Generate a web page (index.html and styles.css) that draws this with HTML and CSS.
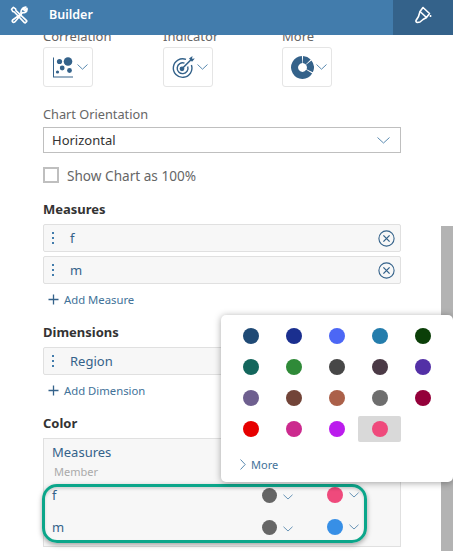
FILE: index.html
```html
<!DOCTYPE html>
<html lang="en">
<head>
  <meta charset="UTF-8" />
  <title>Builder</title>
  <link rel="stylesheet" href="styles.css">
</head>
<body>

  <header class="topbar">
    <svg class="tools-icon" width="18" height="18" viewBox="0 0 18 18" fill="none" stroke="#fff" stroke-width="1.6" stroke-linejoin="round">
      <path d="M1.5 3.2 L3.4 1.3 L5.6 2.8 L6 4.6 L16.6 14.6 Q17 15 16.6 15.6 L15.4 16.7 Q14.9 17 14.4 16.6 L4.3 6 L2.8 5.6 Z" />
      <path d="M15.9 1 L13.5 3.4 L14.7 4.6 L17 2.4 Q17.5 5.6 15 6.6 Q13.8 7 12.8 6.6 L2.6 14 Q1.8 15.2 2.6 16 Q3.6 16.9 4.8 15.9 L11.2 8.4 Q10.2 5 12.6 2.4 Q14 0.9 15.9 1 Z" />
    </svg>
    <span class="topbar-title">Builder</span>
    <div class="topbar-tab">
      <svg width="18" height="18" viewBox="0 0 18 18" fill="none" stroke="#fff" stroke-width="1.6" stroke-linejoin="round">
        <path d="M9 1.5 L15.5 7.5 L12.5 11.5 L6 5.5 Z" />
        <path d="M6 5.5 L4.5 10.5 L2 14.5 Q1.5 16 3.5 16.5 L6 16 L9 13.5 L12.5 11.5" />
        <path d="M16.5 9 V11" />
      </svg>
    </div>
  </header>

  <main class="panel">
    <div class="panel-inner">

      <div class="chart-types">
        <div class="chart-type">
          <div class="field-label">Correlation</div>
          <div class="tile">
            <svg width="21" height="21" viewBox="-1 0 21 21" fill="#34628a">
              <path d="M0 0.5 H1 V19.5 H20 V20.5 H0 Z" />
              <circle cx="15" cy="4.5" r="4.3" />
              <circle cx="6.5" cy="4.5" r="2.6" />
              <circle cx="9.2" cy="11" r="2.4" />
              <circle cx="16.5" cy="13.5" r="2.4" />
              <circle cx="4.5" cy="15" r="1.6" />
            </svg>
            <svg class="chevron" width="11" height="6" viewBox="0 0 11 6"><path d="M0.5 0.5 L5.5 5.2 L10.5 0.5" /></svg>
          </div>
        </div>
        <div class="chart-type chart-type-narrow">
          <div class="field-label">Indicator</div>
          <div class="tile">
            <svg width="23" height="23" viewBox="0 0 23 23" fill="none" stroke="#34628a" stroke-width="1.4">
              <path d="M14 3.4 A9.3 9.3 0 1 0 19.4 9" />
              <path d="M12.5 7.2 A5.4 5.4 0 1 0 15.7 10.5" />
              <circle cx="10" cy="12.8" r="1.7" fill="#34628a" />
              <path d="M10 12.8 L20 2.8" stroke-width="1.6" />
              <path d="M17 2.6 L20.5 0 L20 2.8 L22.8 2.4 L20 5.8 Z" fill="#34628a" stroke="none" />
            </svg>
            <svg class="chevron" width="11" height="6" viewBox="0 0 11 6"><path d="M0.5 0.5 L5.5 5.2 L10.5 0.5" /></svg>
          </div>
        </div>
        <div class="chart-type">
          <div class="field-label">More</div>
          <div class="tile">
            <svg width="23" height="23" viewBox="0 0 23 23" fill="none" stroke="#34628a" stroke-width="7">
              <path d="M11.09 3.61 A7.9 7.9 0 1 0 18.2 15.69" />
              <path d="M11.91 3.61 A7.9 7.9 0 0 1 17.18 6.01" />
              <path d="M17.72 6.64 A7.9 7.9 0 0 1 18.66 14.84" />
            </svg>
            <svg class="chevron" width="11" height="6" viewBox="0 0 11 6"><path d="M0.5 0.5 L5.5 5.2 L10.5 0.5" /></svg>
          </div>
        </div>
      </div>

      <div class="field-label orientation-label">Chart Orientation</div>
      <div class="select">
        <span>Horizontal</span>
        <svg class="chevron" width="13" height="7" viewBox="0 0 13 7"><path d="M0.5 0.5 L6.5 6 L12.5 0.5" /></svg>
      </div>

      <label class="check-row">
        <span class="checkbox"></span>
        <span>Show Chart as 100%</span>
      </label>

      <h2 class="section-title first-title">Measures</h2>
      <div class="token">
        <span class="grip"><i></i><i></i><i></i></span>
        <span class="token-name">f</span>
        <svg class="remove" width="17" height="17" viewBox="0 0 17 17" fill="none" stroke="#34628a" stroke-width="1.1">
          <circle cx="8.5" cy="8.5" r="7.6" />
          <path d="M5.4 5.4 L11.6 11.6 M11.6 5.4 L5.4 11.6" stroke-width="1.3" />
        </svg>
      </div>
      <div class="token token-next">
        <span class="grip"><i></i><i></i><i></i></span>
        <span class="token-name">m</span>
        <svg class="remove" width="17" height="17" viewBox="0 0 17 17" fill="none" stroke="#34628a" stroke-width="1.1">
          <circle cx="8.5" cy="8.5" r="7.6" />
          <path d="M5.4 5.4 L11.6 11.6 M11.6 5.4 L5.4 11.6" stroke-width="1.3" />
        </svg>
      </div>
      <div class="add-link">
        <svg width="11" height="11" viewBox="0 0 11 11" stroke="#34628a" stroke-width="1.3"><path d="M5.5 0.5 V10.5 M0.5 5.5 H10.5" /></svg>
        <span>Add Measure</span>
      </div>

      <h2 class="section-title">Dimensions</h2>
      <div class="token">
        <span class="grip"><i></i><i></i><i></i></span>
        <span class="token-name">Region</span>
      </div>
      <div class="add-link">
        <svg width="11" height="11" viewBox="0 0 11 11" stroke="#34628a" stroke-width="1.3"><path d="M5.5 0.5 V10.5 M0.5 5.5 H10.5" /></svg>
        <span>Add Dimension</span>
      </div>

      <h2 class="section-title">Color</h2>
      <div class="color-box">
        <div class="color-title">Measures</div>
        <div class="color-sub">Member</div>
        <div class="color-row">
          <span class="color-name">f</span>
          <span class="swatch-pick"><b class="dot dot-grey"></b><svg class="chevron" width="10" height="6" viewBox="0 0 11 6"><path d="M0.5 0.5 L5.5 5.2 L10.5 0.5" /></svg></span>
          <span class="swatch-pick"><b class="dot dot-pink"></b><svg class="chevron" width="10" height="6" viewBox="0 0 11 6"><path d="M0.5 0.5 L5.5 5.2 L10.5 0.5" /></svg></span>
        </div>
        <div class="color-row">
          <span class="color-name">m</span>
          <span class="swatch-pick"><b class="dot dot-grey"></b><svg class="chevron" width="10" height="6" viewBox="0 0 11 6"><path d="M0.5 0.5 L5.5 5.2 L10.5 0.5" /></svg></span>
          <span class="swatch-pick"><b class="dot dot-blue"></b><svg class="chevron" width="10" height="6" viewBox="0 0 11 6"><path d="M0.5 0.5 L5.5 5.2 L10.5 0.5" /></svg></span>
        </div>
      </div>

    </div>
  </main>

  <div class="scrollbar"></div>
  <div class="highlight"></div>

  <div class="palette">
    <div class="palette-grid">
      <span class="cell"><b class="dot" style="background:#1f4a75"></b></span>
      <span class="cell"><b class="dot" style="background:#1a2f8f"></b></span>
      <span class="cell"><b class="dot" style="background:#4c67f5"></b></span>
      <span class="cell"><b class="dot" style="background:#247dac"></b></span>
      <span class="cell"><b class="dot" style="background:#0b3f08"></b></span>
      <span class="cell"><b class="dot" style="background:#13665c"></b></span>
      <span class="cell"><b class="dot" style="background:#2f8a38"></b></span>
      <span class="cell"><b class="dot" style="background:#474747"></b></span>
      <span class="cell"><b class="dot" style="background:#4b3a46"></b></span>
      <span class="cell"><b class="dot" style="background:#5330a6"></b></span>
      <span class="cell"><b class="dot" style="background:#6e5f8f"></b></span>
      <span class="cell"><b class="dot" style="background:#724438"></b></span>
      <span class="cell"><b class="dot" style="background:#ab6049"></b></span>
      <span class="cell"><b class="dot" style="background:#6e6e6e"></b></span>
      <span class="cell"><b class="dot" style="background:#94003a"></b></span>
      <span class="cell"><b class="dot" style="background:#e60000"></b></span>
      <span class="cell"><b class="dot" style="background:#cc2a8e"></b></span>
      <span class="cell"><b class="dot" style="background:#bb1ced"></b></span>
      <span class="cell cell-selected"><b class="dot" style="background:#ef4a7c"></b></span>
    </div>
    <div class="palette-more">
      <svg class="chevron" width="6" height="11" viewBox="0 0 6 11"><path d="M0.5 0.5 L5.2 5.5 L0.5 10.5" /></svg>
      <span>More</span>
    </div>
  </div>

</body>
</html>
```

FILE: styles.css
```css
* {
  box-sizing: border-box;
}
body {
  margin: 0;
  width: 453px;
  height: 551px;
  overflow: hidden;
  position: relative;
  background: #fff;
  font-family: "Noto Sans", Arial, sans-serif;
  font-size: 13px;
  color: #666;
}
.topbar {
  height: 35px;
  background: #427cac;
  display: flex;
  align-items: center;
  color: #fff;
}
.tools-icon {
  margin: -5px 0 0 10px;
}
.topbar-title {
  margin: -6px 0 0 21px;
  font-size: 12.5px;
  font-weight: 600;
}
.topbar-tab {
  margin-left: auto;
  width: 60px;
  height: 35px;
  background: #34628a;
  display: flex;
  align-items: center;
  justify-content: center;
  padding-bottom: 5px;
}
.panel {
  height: 516px;
  overflow: hidden;
}
.panel-inner {
  margin: -7px 52px 0 43px;
}
.chart-types {
  display: flex;
}
.chart-type {
  width: 120px;
  flex: none;
}
.chart-type-narrow {
  width: 119px;
}
.field-label {
  height: 16px;
  line-height: 16px;
}
.tile {
  margin-top: 3px;
  width: 50px;
  height: 40px;
  border: 1px solid #e5e5e5;
  border-radius: 3px;
  display: flex;
  align-items: center;
  justify-content: space-between;
  padding: 0 4px 0 8px;
}
.chevron {
  fill: none;
  stroke: #5a8ab0;
  stroke-width: 1;
  flex: none;
}
.orientation-label {
  margin-top: 19px;
  font-size: 12.75px;
}
.select {
  margin-top: 5px;
  height: 26px;
  border: 1px solid #bfbfbf;
  display: flex;
  align-items: center;
  justify-content: space-between;
  padding: 0 10px 0 8px;
  color: #333;
}
.check-row {
  margin-top: 14px;
  height: 16px;
  display: flex;
  align-items: center;
  gap: 8px;
  font-size: 13.6px;
}
.checkbox {
  width: 16px;
  height: 16px;
  border: 2px solid #bfbfbf;
}
.section-title {
  margin: 17px 0 0;
  height: 16px;
  line-height: 16px;
  font-size: 13px;
  font-weight: 700;
  color: #333;
}
.first-title {
  margin-top: 18px;
}
.token {
  margin-top: 7px;
  height: 28px;
  background: #f7f7f7;
  border: 1px solid #e0e0e0;
  border-radius: 2px;
  display: flex;
  align-items: center;
  color: #34628a;
}
.token-next {
  margin-top: 4px;
}
.grip {
  width: 2px;
  margin-left: 8px;
  display: flex;
  flex-direction: column;
  gap: 3px;
}
.grip i {
  width: 2px;
  height: 2px;
  background: #427cac;
}
.token-name {
  margin-left: 16px;
}
.remove {
  margin-left: auto;
  margin-right: 5px;
}
.add-link {
  margin: 7px 0 0 5px;
  height: 16px;
  display: flex;
  align-items: center;
  gap: 5px;
  font-size: 11.3px;
  color: #427299;
}
.color-box {
  margin-top: 7px;
  height: 109px;
  border: 1px solid #e0e0e0;
  background: #f7f7f7;
  padding: 5px 0 0 8px;
}
.color-title {
  height: 16px;
  line-height: 16px;
  color: #34628a;
}
.color-sub {
  margin: 5px 0 0 2px;
  height: 14px;
  line-height: 14px;
  font-size: 11px;
  color: #aaa;
}
.color-row {
  margin-top: 8px;
  height: 16px;
  display: flex;
  align-items: center;
  color: #34628a;
}
.color-row + .color-row {
  margin-top: 16px;
}
.color-name {
  width: 210px;
}
.swatch-pick {
  width: 65px;
  display: flex;
  align-items: center;
  gap: 6px;
}
.swatch-pick:nth-child(2) .chevron {
  margin-top: 3px;
}
.dot {
  display: block;
  width: 16px;
  height: 16px;
  border-radius: 50%;
}
.dot-grey {
  width: 15px;
  height: 15px;
  background: #666;
}
.dot-pink {
  background: #ef4a7c;
}
.dot-blue {
  background: #378fe6;
}
.scrollbar {
  position: absolute;
  left: 441px;
  top: 226px;
  width: 12px;
  height: 325px;
  background: #b3b3b3;
}
.highlight {
  position: absolute;
  left: 42px;
  top: 484px;
  width: 325px;
  height: 59px;
  border: 3px solid #0ba68a;
  border-radius: 15px;
  box-shadow: 0 2px 5px rgba(0,0,0,0.35), inset 0 2px 3px rgba(0,0,0,0.15);
}
.palette {
  position: absolute;
  left: 221px;
  top: 315px;
  width: 232px;
  height: 167px;
  background: #fff;
  border-radius: 5px;
  box-shadow: 0 1px 7px rgba(0,0,0,0.35);
  padding: 8px 0 0 8px;
}
.palette-grid {
  display: grid;
  grid-template-columns: repeat(5, 43px);
  grid-auto-rows: 26px;
  row-gap: 5px;
}
.cell {
  display: flex;
  align-items: center;
  justify-content: center;
  border-radius: 2px;
}
.cell-selected {
  background: #d9d9d9;
}
.palette-more {
  margin: 15px 0 0 11px;
  display: flex;
  align-items: center;
  gap: 5px;
  font-size: 11px;
  color: #427299;
}
```
